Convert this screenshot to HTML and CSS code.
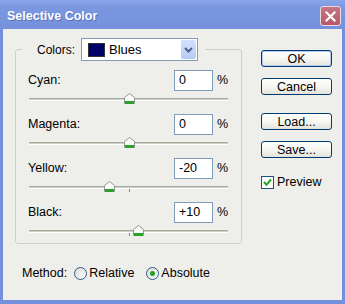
FILE: index.html
```html
<!DOCTYPE html>
<html>

<head>
    <title>Selective Color</title>
    <link rel="stylesheet" href="styles.css">
</head>

<body>
    <div class="window">
        <!-- Title bar -->
        <div class="titlebar">
            <span class="title">Selective Color</span>
            <span class="close-button">
                <svg width="11" height="11" viewBox="0 0 11 11">
                    <path d="M1.5 1.5 L9.5 9.5 M9.5 1.5 L1.5 9.5" stroke="#fff" stroke-width="2.2" stroke-linecap="square"/>
                </svg>
            </span>
        </div>

        <!-- Dialog body -->
        <div class="dialog">
            <div class="main-column">
                <fieldset class="group">
                    <legend>
                        <span class="legend-label">Colors:</span>
                        <span class="select">
                            <span class="swatch"></span>
                            <span class="select-text">Blues</span>
                            <span class="select-arrow">
                                <svg width="9" height="6" viewBox="0 0 9 6">
                                    <path d="M1 1 L4.5 4.5 L8 1" fill="none" stroke="#4d6185" stroke-width="2"/>
                                </svg>
                            </span>
                        </span>
                    </legend>

                    <div class="channel">
                        <div class="channel-row">
                            <span class="channel-label">Cyan:</span>
                            <input type="text" class="value" value="0">
                            <span class="percent">%</span>
                        </div>
                        <div class="slider">
                            <div class="track"></div>
                            <div class="tick"></div>
                            <svg class="thumb" style="left: calc(50% - 5px)" width="11" height="11" viewBox="0 0 11 11">
                                <path d="M0.5 4.5 L5.5 0.5 L10.5 4.5 L10.5 10.5 L0.5 10.5 Z" fill="#fafafa" stroke="#8c9c8c"/>
                                <rect x="1" y="8" width="9" height="3" fill="#2aa12a"/>
                            </svg>
                        </div>
                    </div>

                    <div class="channel">
                        <div class="channel-row">
                            <span class="channel-label">Magenta:</span>
                            <input type="text" class="value" value="0">
                            <span class="percent">%</span>
                        </div>
                        <div class="slider">
                            <div class="track"></div>
                            <div class="tick"></div>
                            <svg class="thumb" style="left: calc(50% - 5px)" width="11" height="11" viewBox="0 0 11 11">
                                <path d="M0.5 4.5 L5.5 0.5 L10.5 4.5 L10.5 10.5 L0.5 10.5 Z" fill="#fafafa" stroke="#8c9c8c"/>
                                <rect x="1" y="8" width="9" height="3" fill="#2aa12a"/>
                            </svg>
                        </div>
                    </div>

                    <div class="channel">
                        <div class="channel-row">
                            <span class="channel-label">Yellow:</span>
                            <input type="text" class="value" value="-20">
                            <span class="percent">%</span>
                        </div>
                        <div class="slider">
                            <div class="track"></div>
                            <div class="tick"></div>
                            <svg class="thumb" style="left: calc(40% - 5px)" width="11" height="11" viewBox="0 0 11 11">
                                <path d="M0.5 4.5 L5.5 0.5 L10.5 4.5 L10.5 10.5 L0.5 10.5 Z" fill="#fafafa" stroke="#8c9c8c"/>
                                <rect x="1" y="8" width="9" height="3" fill="#2aa12a"/>
                            </svg>
                        </div>
                    </div>

                    <div class="channel">
                        <div class="channel-row">
                            <span class="channel-label">Black:</span>
                            <input type="text" class="value" value="+10">
                            <span class="percent">%</span>
                        </div>
                        <div class="slider">
                            <div class="track"></div>
                            <div class="tick"></div>
                            <svg class="thumb" style="left: calc(55% - 5px)" width="11" height="11" viewBox="0 0 11 11">
                                <path d="M0.5 4.5 L5.5 0.5 L10.5 4.5 L10.5 10.5 L0.5 10.5 Z" fill="#fafafa" stroke="#8c9c8c"/>
                                <rect x="1" y="8" width="9" height="3" fill="#2aa12a"/>
                            </svg>
                        </div>
                    </div>
                </fieldset>

                <!-- Method radios -->
                <div class="method">
                    <span class="method-label">Method:</span>
                    <span class="radio"></span>
                    <span class="radio-text">Relative</span>
                    <span class="radio checked"><span class="radio-dot"></span></span>
                    <span class="radio-text">Absolute</span>
                </div>
            </div>

            <!-- Buttons -->
            <div class="side-column">
                <button class="button default">OK</button>
                <button class="button">Cancel</button>
                <button class="button spaced">Load...</button>
                <button class="button">Save...</button>
                <div class="preview">
                    <span class="checkbox">
                        <svg width="9" height="9" viewBox="0 0 9 9">
                            <path d="M1 4 L3.5 6.8 L8 1.5" fill="none" stroke="#21a121" stroke-width="2"/>
                        </svg>
                    </span>
                    <span>Preview</span>
                </div>
            </div>
        </div>
    </div>
</body>

</html>
```

FILE: styles.css
```css
/* Page */
body {
    margin: 0;
    font-family: "Liberation Sans", Arial, sans-serif;
    font-size: 12px;
    color: #000;
}

/* Window frame */
.window {
    width: 345px;
    height: 304px;
    display: flex;
    flex-direction: column;
    background-color: #7490dc;
}

/* Title bar */
.titlebar {
    flex-shrink: 0;
    height: 29px;
    display: flex;
    align-items: center;
    justify-content: space-between;
    padding: 3px 4px 0 7px;
    box-sizing: border-box;
    background: linear-gradient(#8ba6ea, #7a97e0 25%, #7591dd);
}

.title {
    color: white;
    font-weight: bold;
    font-size: 12.5px;
    text-shadow: 1px 1px 0 #5a72b8;
}

.close-button {
    width: 21px;
    height: 20px;
    box-sizing: border-box;
    display: flex;
    align-items: center;
    justify-content: center;
    border: 1px solid #e9dbe2;
    border-radius: 3px;
    background: linear-gradient(#c87584, #b65a69);
}

/* Dialog body */
.dialog {
    flex: 1;
    min-height: 0;
    display: flex;
    margin: 0 3px 4px 3px;
    padding-left: 12px;
    background-color: #eeeeea;
}

.main-column {
    width: 227px;
    padding-top: 9px;
}

/* Group box */
.group {
    margin: 0;
    padding: 8px 12px 7px 12px;
    border: 1px solid #d0d0c4;
    border-radius: 3px;
}

.group legend {
    display: flex;
    align-items: center;
    margin-left: -6px;
    padding: 0 7px 0 15px;
}

.legend-label {
    margin-right: 6px;
}

.select {
    width: 117px;
    height: 23px;
    box-sizing: border-box;
    display: flex;
    align-items: center;
    padding-left: 6px;
    border: 1px solid #7f9db9;
    background-color: white;
}

.swatch {
    width: 17px;
    height: 14px;
    box-sizing: border-box;
    border: 1px solid #333;
    background-color: #000066;
}

.select-text {
    flex: 1;
    margin-left: 4px;
    font-size: 13px;
}

.select-arrow {
    width: 15px;
    height: 19px;
    margin-right: 1px;
    display: flex;
    align-items: center;
    justify-content: center;
    border-radius: 2px;
    background: linear-gradient(#d2e0fc, #b7cbf7);
}

/* Channel rows */
.channel + .channel {
    margin-top: 9px;
}

.channel-row {
    height: 22px;
    display: flex;
    align-items: center;
}

.channel-label {
    flex: 1;
    font-size: 12.5px;
}

.value {
    width: 39px;
    height: 21px;
    box-sizing: border-box;
    margin: 0;
    padding: 0 4px;
    border: 1px solid #7f9db9;
    font-family: "Liberation Sans", Arial, sans-serif;
    font-size: 12.5px;
    color: #000;
}

.percent {
    width: 12px;
    margin-left: 4px;
    font-size: 12.5px;
}

/* Sliders */
.slider {
    position: relative;
    height: 6px;
    padding-top: 7px;
    margin: 0 1px;
}

.track {
    height: 1px;
    border-top: 1px solid #a9a9a0;
    border-bottom: 1px solid #ffffff;
    background-color: #cfcfc6;
}

.tick {
    position: absolute;
    left: 50%;
    top: 10px;
    width: 1px;
    height: 3px;
    background-color: #8c8c84;
}

.thumb {
    position: absolute;
    top: 2px;
}

/* Method row */
.method {
    display: flex;
    align-items: center;
    height: 20px;
    margin-top: 19px;
    padding-left: 7px;
    font-size: 12.5px;
}

.method-label {
    margin-right: 7px;
}

.radio {
    width: 13px;
    height: 13px;
    box-sizing: border-box;
    display: flex;
    align-items: center;
    justify-content: center;
    border: 1px solid #2a5b8c;
    border-radius: 50%;
    background: linear-gradient(135deg, #dcdcd6, #ffffff);
}

.radio.checked {
    margin-left: 12px;
}

.radio-dot {
    width: 5px;
    height: 5px;
    border-radius: 50%;
    background-color: #21a121;
}

.radio-text {
    margin-left: 2px;
}

/* Buttons */
.side-column {
    display: flex;
    flex-direction: column;
    width: 71px;
    margin-left: 19px;
    padding-top: 21px;
}

.button {
    height: 17px;
    margin: 0 0 11px 0;
    padding: 0;
    border: 1px solid #003c74;
    border-radius: 3px;
    background: linear-gradient(#ffffff, #f4f4ef 60%, #e3e2da);
    font-family: "Liberation Sans", Arial, sans-serif;
    font-size: 12.5px;
    color: #000;
}

.button.default {
    box-shadow: inset 0 0 0 1px #b6c9f0;
}

.button.spaced {
    margin-top: 7px;
}

/* Preview checkbox */
.preview {
    display: flex;
    align-items: center;
    margin-top: 6px;
    font-size: 12.5px;
}

.checkbox {
    width: 13px;
    height: 13px;
    box-sizing: border-box;
    display: flex;
    align-items: center;
    justify-content: center;
    margin-right: 3px;
    border: 1px solid #1c5180;
    background-color: white;
}
```
